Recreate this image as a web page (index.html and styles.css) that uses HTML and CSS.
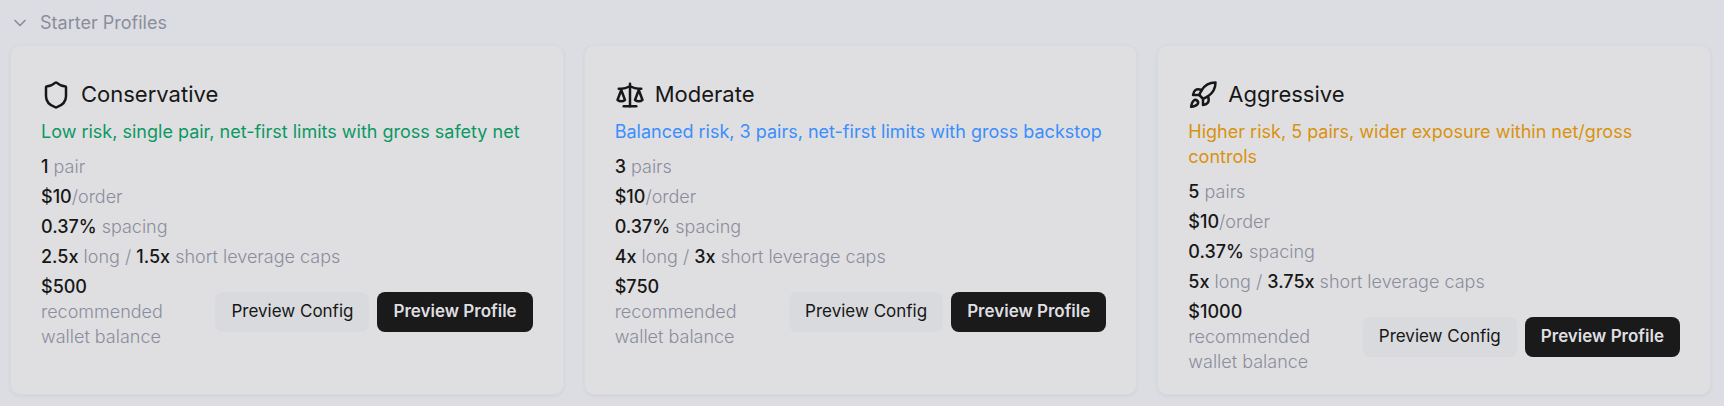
FILE: index.html
```html
<!DOCTYPE html>
<html lang="en">

<head>
    <meta charset="UTF-8">
    <meta name="viewport" content="width=device-width, initial-scale=1.0">
    <title>Starter Profiles</title>
    <link rel="stylesheet" href="styles.css">
</head>

<body>
    <section class="profiles">
        <button type="button" class="profiles-toggle" aria-expanded="true" aria-controls="profile-list">
            <svg class="chevron" viewBox="0 0 24 24" aria-hidden="true">
                <path d="m6 9 6 6 6-6" />
            </svg>
            Starter Profiles
        </button>

        <div class="profile-list" id="profile-list">
            <article class="card">
                <h2 class="card-title">
                    <svg class="icon" viewBox="0 0 24 24" aria-hidden="true">
                        <path d="M20 13c0 5-3.5 7.5-7.66 8.95a1 1 0 0 1-.67-.01C7.5 20.5 4 18 4 13V6a1 1 0 0 1 1-1c2 0 4.5-1.2 6.24-2.72a1.17 1.17 0 0 1 1.52 0C14.51 3.81 17 5 19 5a1 1 0 0 1 1 1z" />
                    </svg>
                    Conservative
                </h2>
                <p class="summary low">Low risk, single pair, net-first limits with gross safety net</p>
                <ul class="facts">
                    <li><b>1</b> pair</li>
                    <li><b>$10</b>/order</li>
                    <li><b>0.37%</b> spacing</li>
                    <li><b>2.5x</b> long / <b>1.5x</b> short leverage caps</li>
                </ul>
                <div class="card-footer">
                    <p class="balance"><b>$500</b> recommended wallet balance</p>
                    <div class="actions">
                        <button type="button" class="btn btn-secondary">Preview Config</button>
                        <button type="button" class="btn btn-primary">Preview Profile</button>
                    </div>
                </div>
            </article>

            <article class="card">
                <h2 class="card-title">
                    <svg class="icon" viewBox="0 0 24 24" aria-hidden="true">
                        <path d="m16 16 3-8 3 8c-.87.65-1.92 1-3 1s-2.13-.35-3-1Z" />
                        <path d="m2 16 3-8 3 8c-.87.65-1.92 1-3 1s-2.13-.35-3-1Z" />
                        <path d="M7 21h10" />
                        <path d="M12 3v18" />
                        <path d="M3 7h2c2 0 5-1 7-2 2 1 5 2 7 2h2" />
                    </svg>
                    Moderate
                </h2>
                <p class="summary medium">Balanced risk, 3 pairs, net-first limits with gross backstop</p>
                <ul class="facts">
                    <li><b>3</b> pairs</li>
                    <li><b>$10</b>/order</li>
                    <li><b>0.37%</b> spacing</li>
                    <li><b>4x</b> long / <b>3x</b> short leverage caps</li>
                </ul>
                <div class="card-footer">
                    <p class="balance"><b>$750</b> recommended wallet balance</p>
                    <div class="actions">
                        <button type="button" class="btn btn-secondary">Preview Config</button>
                        <button type="button" class="btn btn-primary">Preview Profile</button>
                    </div>
                </div>
            </article>

            <article class="card">
                <h2 class="card-title">
                    <svg class="icon" viewBox="0 0 24 24" aria-hidden="true">
                        <path d="M4.5 16.5c-1.5 1.26-2 5-2 5s3.74-.5 5-2c.71-.84.7-2.13-.09-2.91a2.18 2.18 0 0 0-2.91-.09z" />
                        <path d="m12 15-3-3a22 22 0 0 1 2-3.95A12.88 12.88 0 0 1 22 2c0 2.72-.78 7.5-6 11a22.35 22.35 0 0 1-4 2z" />
                        <path d="M9 12H4s.55-3.03 2-4c1.62-1.08 5 0 5 0" />
                        <path d="M12 15v5s3.03-.55 4-2c1.08-1.62 0-5 0-5" />
                    </svg>
                    Aggressive
                </h2>
                <p class="summary high">Higher risk, 5 pairs, wider exposure within net/gross controls</p>
                <ul class="facts">
                    <li><b>5</b> pairs</li>
                    <li><b>$10</b>/order</li>
                    <li><b>0.37%</b> spacing</li>
                    <li><b>5x</b> long / <b>3.75x</b> short leverage caps</li>
                </ul>
                <div class="card-footer">
                    <p class="balance"><b>$1000</b> recommended wallet balance</p>
                    <div class="actions">
                        <button type="button" class="btn btn-secondary">Preview Config</button>
                        <button type="button" class="btn btn-primary">Preview Profile</button>
                    </div>
                </div>
            </article>
        </div>
    </section>
</body>

</html>
```
FILE: styles.css
```css
:root {
    --page: #dcdde2;
    --card: #dfdfe1;
    --card-border: #d8dae1;
    --text: #171717;
    --muted: #8b8d9d;
    --secondary: #d9dadd;
    --primary: #1a1a1a;
    --low: #0b9863;
    --medium: #3b8efc;
    --high: #d9920f;
}

* {
    box-sizing: border-box;
}

body {
    margin: 0;
    padding: 10px 13px 11px 10px;
    background: var(--page);
    color: var(--text);
    font-family: Inter, sans-serif;
    font-size: 18px;
    line-height: 25px;
}

h2,
p,
ul {
    margin: 0;
    padding: 0;
}

button {
    font: inherit;
    cursor: pointer;
}

svg {
    flex: none;
    fill: none;
    stroke: currentColor;
    stroke-width: 2;
    stroke-linecap: round;
    stroke-linejoin: round;
}

.profiles-toggle {
    display: flex;
    align-items: center;
    gap: 10px;
    padding: 0;
    border: 0;
    background: none;
    color: var(--muted);
}

.chevron {
    width: 20px;
    height: 20px;
}

.profile-list {
    display: grid;
    grid-template-columns: repeat(3, 1fr);
    gap: 20px;
    margin-top: 10px;
}

.card {
    padding: 31px 30px 20px;
    border: 1px solid var(--card-border);
    border-radius: 10px;
    background: var(--card);
    box-shadow: 0 1px 3px rgba(120, 125, 150, 0.12);
}

.card-title {
    display: flex;
    align-items: center;
    gap: 10px;
    font-size: 22px;
    font-weight: 400;
    line-height: 35px;
}

.icon {
    width: 30px;
    height: 30px;
}

.summary {
    margin: 7px 0 10px;
}

.low {
    color: var(--low);
}

.medium {
    color: var(--medium);
}

.high {
    color: var(--high);
}

.facts {
    display: flex;
    flex-direction: column;
    gap: 5px;
    list-style: none;
}

.facts,
.balance {
    color: var(--muted);
    font-weight: 300;
}

b {
    color: var(--text);
    font-weight: 500;
}

.card-footer {
    display: flex;
    align-items: center;
    gap: 10px;
    margin-top: 5px;
}

.balance {
    flex: 1;
}

.actions {
    display: flex;
    gap: 8px;
}

.btn {
    height: 40px;
    padding: 0 16px;
    border: 0;
    border-radius: 8px;
    font-size: 17px;
    white-space: nowrap;
}

.btn-secondary {
    background: var(--secondary);
    color: var(--text);
}

.btn-primary {
    background: var(--primary);
    color: var(--card);
    font-weight: 600;
}
```
